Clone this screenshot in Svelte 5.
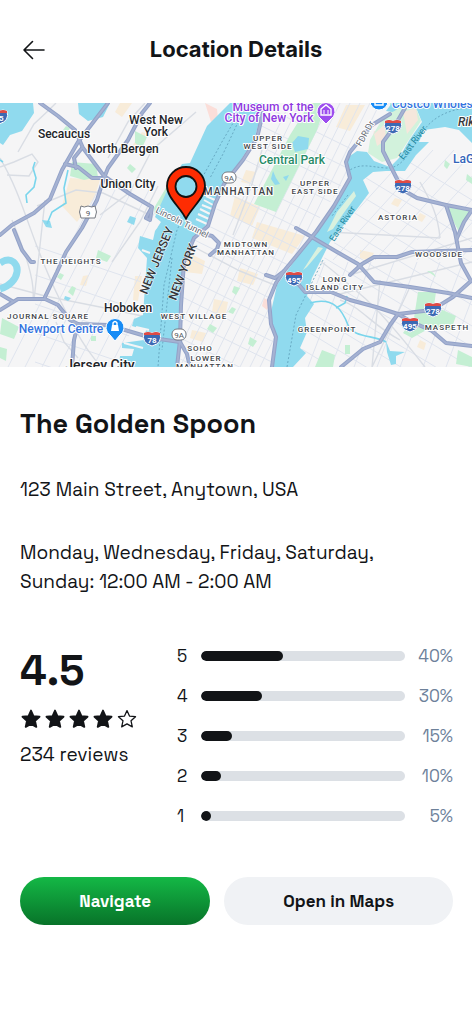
<script lang="ts">
    type Label = { text: string; x: number; y: number; size?: number };

    const place = {
        name: 'The Golden Spoon',
        address: '123 Main Street, Anytown, USA',
        hours: 'Monday, Wednesday, Friday, Saturday, Sunday: 12:00 AM - 2:00 AM',
        rating: 4.5,
        reviews: 234,
    };

    const breakdown = [
        { stars: 5, percent: 40 },
        { stars: 4, percent: 30 },
        { stars: 3, percent: 15 },
        { stars: 2, percent: 10 },
        { stars: 1, percent: 5 },
    ];

    const towns: Label[] = [
        { text: 'Secaucus', x: 64, y: 138 },
        { text: 'West New', x: 156, y: 124 },
        { text: 'York', x: 156, y: 136 },
        { text: 'North Bergen', x: 123, y: 153 },
        { text: 'Union City', x: 128, y: 188 },
        { text: 'Hoboken', x: 128, y: 312 },
        { text: 'Jersey City', x: 100, y: 370, size: 14 },
    ];

    const areas: Label[] = [
        { text: 'UPPER', x: 268, y: 141 },
        { text: 'WEST SIDE', x: 268, y: 149 },
        { text: 'MANHATTAN', x: 239, y: 195, size: 10 },
        { text: 'UPPER', x: 315, y: 186 },
        { text: 'EAST SIDE', x: 315, y: 194 },
        { text: 'ASTORIA', x: 398, y: 220 },
        { text: 'MIDTOWN', x: 246, y: 247 },
        { text: 'MANHATTAN', x: 246, y: 255 },
        { text: 'THE HEIGHTS', x: 71, y: 264 },
        { text: 'WOODSIDE', x: 439, y: 257 },
        { text: 'LONG', x: 335, y: 282 },
        { text: 'ISLAND CITY', x: 335, y: 290 },
        { text: 'JOURNAL SQUARE', x: 48, y: 319 },
        { text: 'WEST VILLAGE', x: 194, y: 319 },
        { text: 'GREENPOINT', x: 327, y: 332 },
        { text: 'MASPETH', x: 447, y: 330 },
        { text: 'SOHO', x: 200, y: 351 },
        { text: 'LOWER', x: 206, y: 361 },
        { text: 'MANHATTAN', x: 205, y: 369 },
    ];

    const interstates = [
        { no: '278', x: 393, y: 127 },
        { no: '278', x: 403, y: 187 },
        { no: '495', x: 294, y: 279 },
        { no: '278', x: 433, y: 310 },
        { no: '495', x: 410, y: 325 },
        { no: '78', x: 152, y: 339 },
        { no: '95', x: -1, y: 117 },
    ];

    const highways = [
        'M0 235 L12 225 L34 213 L50 199 L62 170 L78 142 L108 103',
        'M40 103 L58 116 L75 130 L83 148 L104 176 L130 194 L152 207 L150 220 L146 218 L152 207',
        'M65 164 L78 167 L92 178 L104 178 M82 148 L74 158 L76 168',
        'M150 103 L142 113 L128 140 L108 168 L104 178 L97 200 L82 228 L66 252 L57 272 L45 297',
        'M0 310 L18 299 L45 299 L58 305 L70 320 L78 324 L108 325 L152 338 L180 342 L187 354 L190 367',
        'M0 294 L12 301 M78 324 L74 340 L72 367',
        'M14 230 L22 250 L31 262 L34 262',
        'M264 108 L257 138 L243 160 L224 184 L215 204 L208 226 L194 238 L184 262 L181 305 L180 340 L177 367',
        'M204 234 L212 236 L219 243 L217 249 L210 255',
        'M266 275 L275 278 L284 271 M284 271 L276 283 L269 300 L271 324 L276 337 L272 367',
        'M390 114 L372 125 L350 152 L346 162 L350 178 L334 206 L316 232 L298 254 L284 271',
        'M405 108 L394 127 L383 142 L383 151 L396 177 L403 190 L417 198 L446 205 L472 210',
        'M296 228 L310 236 L337 252 L358 264 L374 282 L410 287 L448 293 L472 298',
        'M294 279 L305 292 L331 292 L350 300 L376 307 L398 314 L410 321 L432 331 L446 343 L472 346',
        'M341 367 L363 349 L380 342 L390 325 L398 314 L432 310 L453 297 L471 281 L461 263 L455 232 L446 205',
        'M350 275 L362 264 L374 257 L397 257 L412 252 L472 250 M457 238 L464 222 L472 210',
    ];

    // street grids, each one clipped to its own stretch of land
    const lines = (n: number, step: number) => Array.from({ length: n }, (_, i) => i * step);
</script>

{#snippet star(filled: boolean)}
    <svg class="star" viewBox="0 0 24 24" aria-hidden="true">
        <path
            d="M12 2.8 L14.7 8.8 L21.3 9.5 L16.4 14 L17.8 20.6 L12 17.3 L6.2 20.6 L7.6 14 L2.7 9.5 L9.3 8.8 Z"
            fill={filled ? '#121417' : 'none'}
            stroke="#121417"
            stroke-width={filled ? 2 : 1.4}
            stroke-linejoin="round"
        />
    </svg>
{/snippet}

<svelte:head>
    <title>Location Details</title>
</svelte:head>

<div class="page">
    <header>
        <button type="button" class="back" aria-label="Back">
            <svg viewBox="0 0 24 24" aria-hidden="true">
                <path d="M22 12 H2 M10.5 3.5 L2 12 L10.5 20.5" />
            </svg>
        </button>
        <h1>Location Details</h1>
    </header>

    <svg class="map" viewBox="0 103 472 264" preserveAspectRatio="xMidYMid slice" role="img" aria-label="Map">
        <defs>
            <clipPath id="manhattan">
                <path d="M270 103 L385 103 L346 160 L346 178 L300 248 L276 280 L268 300 L275 337 L270 367 L180 367 L184 262 L195 240 L212 225 L224 184 L257 140 Z" />
            </clipPath>
            <clipPath id="queens">
                <path d="M425 130 L472 145 L472 367 L300 367 L308 300 L325 256 L368 195 L366 178 L400 170 Z" />
            </clipPath>
            <clipPath id="jersey">
                <path d="M0 103 H225 L200 140 L165 195 L145 240 L135 320 L118 367 H0 Z" />
            </clipPath>
        </defs>
        <rect y="103" width="472" height="264" fill="#f5f5f6" />

        <g fill="#f8ecd9">
            <path d="M70 178 L100 180 L94 198 L77 222 L62 206 Z" />
            <path d="M120 103 L132 103 L122 117 L115 112 Z M187 252 L205 261 L202 274 L185 272 Z" />
            <path d="M235 196 L260 207 L252 226 L230 216 Z M257 222 L305 236 L292 254 L252 238 Z" />
            <path d="M246 170 L256 172 L250 184 L241 182 Z M346 105 L365 105 L350 131 L336 127 Z" />
            <path d="M240 268 L258 274 L253 285 L237 281 Z M214 299 L228 302 L225 317 L212 312 Z M192 330 L206 333 L203 342 L190 338 Z" />
            <path d="M395 198 L402 200 L398 207 L391 204 Z M420 213 L426 216 L422 222 L416 219 Z M360 250 L374 253 L369 261 L360 258 Z M420 340 L426 343 L424 350 L417 347 Z" />
            <path d="M142 132 L148 134 L135 153 L130 149 Z M135 276 L142 276 L138 301 L133 300 Z M83 276 L89 275 L86 286 L80 285 Z" />
        </g>
        <path d="M205 103 L217 109 L218 119 L211 122 Z M374 131 L384 135 L381 144 L372 142 Z M264 298 L271 302 L267 310 L262 306 Z" fill="#fbded9" />

        <g stroke="#dfe4ee" stroke-width="1" fill="none">
            <g clip-path="url(#manhattan)">
                {#each lines(24, 10) as o}
                    <path d={`M${160 + o} 367 L${290 + o} 103`} />
                {/each}
                {#each lines(15, 21) as o}
                    <path d={`M170 ${60 + o} L390 ${168 + o}`} />
                {/each}
            </g>
            <g clip-path="url(#queens)">
                {#each lines(14, 21) as o}
                    <path d={`M${270 + o} 260 L${370 + o} 150`} />
                    <path d={`M290 ${90 + o} L472 ${200 + o}`} />
                {/each}
                {#each lines(9, 23) as o}
                    <path d={`M${285 + o} 367 L${325 + o} 262`} />
                {/each}
            </g>
            <g clip-path="url(#jersey)">
                {#each lines(12, 17) as o}
                    <path d={`M${8 + o} 367 L${98 + o} 190`} />
                {/each}
                {#each lines(5, 29) as o}
                    <path d={`M35 ${246 + o} L165 ${290 + o}`} />
                {/each}
            </g>
        </g>
        <g stroke="#d9dde4" stroke-width="1.4" fill="none">
            <path d="M0 158 C25 200 30 240 60 300 S90 350 100 367 M12 220 C25 252 35 280 33 299 M45 200 L34 300" />
            <path d="M0 167 L14 162 L32 154 L38 162 L29 176 L7 175 M18 152 L34 124 L49 110 L56 103 M37 206 L76 190 L103 193 L150 215" />
            <path d="M0 284 L45 296 L110 309 L142 316 M56 322 L64 342 L78 358" />
            <path d="M192 246 L240 271 L287 290 L340 294 L472 262 M262 150 L252 184 L233 235" />
            <path d="M312 256 C330 266 345 282 360 294 S400 335 425 367 M420 182 C430 200 438 214 440 238 M340 300 C360 306 372 325 400 340" />
            <path d="M380 280 L372 367 M330 232 L440 238 M410 287 L372 367 M350 275 L472 238" />
            <path d="M145 103 L128 122 L108 158 M100 215 L130 192 L152 150 L196 112 M112 262 L140 222 L158 186" />
        </g>

        <g fill="#c4efd3">
            <path d="M290 135 L310 103 L326 103 L317 130 L276 212 L254 204 Z" />
            <path d="M72 162 L96 164 L98 177 L84 180 L70 176 Z M135 131 L147 137 L142 148 L135 143 Z M130 164 L136 169 L132 173 L127 168 Z M66 126 L70 128 L68 132 L63 130 Z" />
            <path d="M98 250 L111 256 L107 262 L96 258 Z M72 286 L76 288 L73 296 L68 292 Z M2 318 L19 327 L14 339 L0 334 Z M91 336 H96 V341 H91 Z M60 273 L64 275 L61 280 L57 277 Z M0 347 L7 349 L6 361 L0 358 Z" />
            <path d="M234 286 L240 288 L236 295 L232 292 Z M250 337 L257 341 L253 347 L248 344 Z M210 324 L217 328 L213 333 L207 329 Z M232 307 L236 309 L233 314 L228 312 Z" />
            <path d="M418 292 L436 292 L434 306 L456 316 L451 330 L430 328 L412 338 L403 333 L414 318 Z M446 207 L471 211 L459 232 Z M467 174 L472 178 L472 184 L466 180 Z M445 160 L450 164 L447 169 L444 166 Z" />
            <path d="M322 350 L335 355 L333 367 L315 367 Z M345 345 H350 V354 H345 Z M458 350 L472 357 V367 L456 364 Z M427 271 Q433 270 436 277" />
            <path d="M170 181 L166 200 L155 215 L154 208 Z M390 103 H406 V112 L390 112 Z" />
        </g>

        <g fill="#90daee">
            <path d="M230 103 H264 L255 137 L241 160 L222 184 L213 205 L207 224 L193 238 L184 260 L180 305 L178 367 H119 L120 356 L132 356 L134 349 L122 348 L122 343 L144 340 L146 330 L132 326 L134 319 L143 315 L147 258 L138 248 L140 236 L153 240 L155 231 L161 222 L155 217 L170 184 L182 164 L190 163 L207 126 Z" />
            <path d="M0 103 H33 L34 113 L22 131 L10 135 L3 145 L0 143 Z M78 103 L110 103 L103 117 L88 121 L79 114 Z" />
            <path d="M42 220 L50 221 L52 228 L46 227 Z M65 296 L71 298 L68 301 L64 299 Z M130 216 L136 218 L134 225 L127 222 Z" />
            <path d="M386 111 L392 103 H472 V143 L459 130 L445 127 L424 130 L419 142 L429 142 L416 155 L405 171 L386 171 L373 172 L363 180 L369 193 L357 209 L348 220 L330 242 L322 258 L312 278 L307 296 L314 304 L305 318 L307 332 L300 348 L306 353 L293 367 H272 L277 337 L270 316 L277 285 L298 256 L317 230 L342 194 L348 178 L347 158 L357 151 L367 152 L374 161 L390 167 L399 158 L410 139 L422 122 L417 110 L403 105 L393 112 Z" />
            <path d="M292 143 L298 136 L309 138 L308 149 L295 152 Z M273 171 L276 178 L280 184 L275 185 L271 179 Z M283 177 L289 175 L286 181 Z M386 341 L390 351 L405 352 L396 356 L396 364 L391 365 L387 352 Z" />
        </g>
        <path d="M0 263 C12 255 18 265 17 272 S10 286 0 289" fill="none" stroke="#90daee" stroke-width="7" />
        <path d="M354 191 L356 196 L343 214 L333 229 L327 232 L337 212 Z M318 247 L323 248 L307 267 L303 270 Z" fill="#d9f1df" />
        <path d="M370 140 L384 116 L399 109 L416 108 L421 121 L410 138 L397 158 L382 162 L368 153 Z" fill="#d2f2dc" />
        <path d="M374 134 L385 124 L386 140 L377 146 Z M403 112 L416 108 L418 120 L407 134 Z" fill="#f5e7dc" />

        <g stroke="#79d5ec" stroke-width="1.6" fill="none">
            <path d="M35 162 L33 168 L36 178 L34 187 L26 195 L27 203 M68 170 L64 188 L66 203 L52 212 L47 224 M3 162 L0 160" />
            <path d="M310 303 C335 296 343 312 348 325 S375 335 386 342 M347 296 L345 303 L336 308 M354 290 V284" />
        </g>
        <g stroke="#f5f5f6" stroke-width="2">
            <path d="M206 196 L215 200 M204 200 L213 205 M202 205 L212 209 M200 209 L210 214 M198 214 L209 219 M196 219 L207 224" />
            <path d="M124 343 L143 348 M136 327 L149 330 M142 250 L150 253 M152 225 L157 228" />
        </g>
        <g fill="none" stroke="#5d9db8" stroke-width="0.8" stroke-dasharray="2 2">
            <path d="M245 103 L223 140 L202 178 L177 230 L164 285 L158 367 M240 118 L223 154 L210 178 M172 258 L162 350" />
            <path d="M347 172 C360 162 370 167 386 168 S410 152 422 133 S455 108 472 108 M323 260 L296 315 L287 367 M348 195 L332 216" />
        </g>

        <g fill="none" stroke-linejoin="round" stroke-linecap="round">
            {#each highways as d}
                <path {d} stroke="#93a2c8" stroke-width="4" />
            {/each}
            {#each highways as d}
                <path {d} stroke="#a5b2d2" stroke-width="2" />
            {/each}
        </g>

        <g class="water-label">
            <text transform="translate(334 242) rotate(-57)">East River</text>
            <text transform="translate(403 160) rotate(-52)">East River</text>
        </g>
        <g class="road-label">
            <text transform="translate(155 212) rotate(27)">Lincoln Tunnel</text>
            <text transform="translate(361 147) rotate(-61)">FDR Dr</text>
        </g>
        <g class="state">
            <text transform="translate(147 295) rotate(-68)">NEW JERSEY</text>
            <text transform="translate(176 301) rotate(-69)">NEW YORK</text>
        </g>
        <g class="area">
            {#each areas as a}
                <text x={a.x} y={a.y} font-size={a.size ?? 8}>{a.text}</text>
            {/each}
        </g>
        <g class="town">
            {#each towns as t}
                <text x={t.x} y={t.y} font-size={t.size ?? 12}>{t.text}</text>
            {/each}
        </g>
        <g class="poi">
            <text x="273" y="111" fill="#8f3ae0">Museum of the</text>
            <text x="269" y="122" fill="#8f3ae0">City of New York</text>
            <text x="292" y="164" fill="#278a67">Central Park</text>
            <text x="61" y="333" fill="#3474e0">Newport Centre</text>
            <text class="from-left" x="392" y="108" fill="#3474e0">Costco Wholesale</text>
            <text class="from-left" x="453" y="163" fill="#3465ba">LaG</text>
            <text class="from-left" x="458" y="126" fill="#36383c" font-style="italic">Rik</text>
        </g>

        <g stroke="#fff" stroke-width="1">
            <path d="M326 124 L321 119 A9 9 0 1 1 331 119 Z" fill="#9c4dee" />
            <path d="M115 341 L110 335 A9 9 0 1 1 120 335 Z" fill="#168bf5" />
            <circle cx="379" cy="101" r="9" fill="#168bf5" />
        </g>
        <path d="M321 109 L326 105 L331 109 V115 H321 Z M375 102 H383 V105 H375 Z" fill="none" stroke="#fff" stroke-width="1.4" />
        <path d="M324 110 V114 M328 110 V114" stroke="#fff" />
        <path d="M112 325 H118 L119 331 H111 Z" fill="#fff" />
        <path d="M113 326 V323 Q115 320 117 323 V326" fill="none" stroke="#fff" stroke-width="1.4" />

        {#each interstates as s}
            <g transform={`translate(${s.x} ${s.y})`}>
                <path d="M-8 -6 Q-4 -8 0 -6 Q4 -8 8 -6 Q11 4 0 7 Q-11 4 -8 -6 Z" fill="#3c69b4" stroke="#fff" stroke-width="1" />
                <path d="M-8 -6 Q-4 -8 0 -6 Q4 -8 8 -6 L8 -4 H-8 Z" fill="#df4b45" />
                <text class="shield" y="4">{s.no}</text>
            </g>
        {/each}
        <g class="route">
            <rect x="222" y="172" width="14" height="11" rx="5" />
            <text x="229" y="181">9A</text>
            <rect x="172" y="329" width="14" height="11" rx="5" />
            <text x="179" y="338">9A</text>
            <path d="M81 206 Q84 208 88 206 Q92 208 95 206 Q98 212 95 218 H81 Q78 212 81 206 Z" />
            <text x="88" y="216">9</text>
        </g>

        <path
            d="M186 219 C181 208 167 198 167 186 A19 19 0 0 1 205 186 C205 198 191 208 186 219 Z M186 176 A10.5 10.5 0 1 0 186 197 A10.5 10.5 0 1 0 186 176 Z"
            fill="#fe2c02"
            fill-rule="evenodd"
            stroke="#111"
            stroke-width="1.8"
            stroke-linejoin="round"
        />
    </svg>

    <main>
        <h2>{place.name}</h2>
        <p>{place.address}</p>
        <p class="hours">{place.hours}</p>

        <section class="ratings">
            <div class="summary">
                <div class="score">{place.rating}</div>
                <div class="stars" role="img" aria-label={`${place.rating} out of 5 stars`}>
                    {#each [1, 2, 3, 4, 5] as n}
                        {@render star(n <= place.rating)}
                    {/each}
                </div>
                <div class="count">{place.reviews} reviews</div>
            </div>
            <div class="breakdown">
                {#each breakdown as row}
                    <div class="row">
                        <span>{row.stars}</span>
                        <div class="track">
                            <div class="fill" style={`width: ${row.percent}%`}></div>
                        </div>
                        <span class="percent">{row.percent}%</span>
                    </div>
                {/each}
            </div>
        </section>

        <div class="actions">
            <button type="button" class="navigate">Navigate</button>
            <button type="button" class="open">Open in Maps</button>
        </div>
    </main>
</div>

<style>
    :global(body) {
        margin: 0;
        background: #fff;
    }

    .page {
        font-family: 'Space Grotesk', Inter, sans-serif;
        color: #121417;
    }

    header {
        display: grid;
        grid-template-columns: 28px 1fr 28px;
        align-items: center;
        padding: 33px 20px 37px;
    }

    .back {
        display: flex;
        padding: 2px;
        border: none;
        background: none;
        cursor: pointer;
    }

    .back svg {
        width: 24px;
        height: 24px;
        fill: none;
        stroke: #121417;
        stroke-width: 1.6;
        stroke-linecap: round;
        stroke-linejoin: round;
    }

    h1 {
        margin: 0;
        text-align: center;
        font-family: Inter, sans-serif;
        font-size: 22px;
        line-height: 33px;
        font-weight: 700;
    }

    .map {
        display: block;
        width: 100%;
        font-family: Roboto, sans-serif;
    }

    .map text {
        paint-order: stroke;
        stroke: #fff;
        stroke-width: 2px;
        stroke-linejoin: round;
    }

    .town text,
    .area text,
    .poi text {
        text-anchor: middle;
    }

    .town text {
        fill: #222428;
        font-weight: 500;
    }

    .area text {
        fill: #404348;
        font-weight: 500;
        letter-spacing: 1px;
    }

    .poi text {
        font-size: 12px;
        font-weight: 500;
    }

    .poi .from-left {
        text-anchor: start;
    }

    .state text {
        fill: #33373c;
        font-size: 12px;
        font-weight: 500;
        stroke-width: 1px;
    }

    .road-label text {
        fill: #666b75;
        font-size: 9px;
    }

    .map .water-label text {
        fill: #20879e;
        font-size: 9px;
        stroke: none;
    }

    .map .shield {
        fill: #fff;
        stroke: none;
        font-size: 8px;
        font-weight: 700;
        text-anchor: middle;
    }

    .route rect,
    .route path {
        fill: #fff;
        stroke: #777b82;
        stroke-width: 1px;
    }

    .map .route text {
        fill: #555960;
        stroke: none;
        font-size: 8px;
        text-anchor: middle;
    }

    main {
        padding: 40px 19px 40px 20px;
    }

    h2 {
        margin: 0;
        font-size: 27px;
        line-height: 34px;
        font-weight: 700;
    }

    p {
        margin: 34px 0 0;
        font-size: 19px;
        line-height: 29px;
    }

    .hours {
        padding-right: 40px;
    }

    .ratings {
        display: grid;
        grid-template-columns: 118px 1fr;
        gap: 39px;
        margin-top: 40px;
    }

    .score {
        margin-top: 6px;
        font-size: 42px;
        line-height: 58px;
        font-weight: 700;
    }

    .stars {
        display: flex;
        gap: 2px;
        padding: 8px 0 10px;
    }

    .star {
        width: 22px;
        height: 22px;
    }

    .count {
        font-size: 19px;
        line-height: 29px;
    }

    .row {
        display: grid;
        grid-template-columns: 24px 1fr 48px;
        align-items: center;
        height: 40px;
        font-size: 17px;
    }

    .track {
        height: 10px;
        border-radius: 5px;
        background: #dce0e5;
        overflow: hidden;
    }

    .fill {
        height: 100%;
        border-radius: 5px;
        background: #121417;
    }

    .percent {
        color: #6d819a;
        text-align: right;
    }

    .actions {
        display: grid;
        grid-template-columns: 5fr 6fr;
        gap: 14px;
        margin-top: 41px;
    }

    .actions button {
        height: 48px;
        border: none;
        border-radius: 24px;
        font-family: inherit;
        font-size: 17px;
        font-weight: 700;
        cursor: pointer;
    }

    .navigate {
        background: linear-gradient(#14b846, #087329);
        color: #fff;
    }

    .open {
        background: #f0f2f5;
        color: #121417;
    }
</style>
